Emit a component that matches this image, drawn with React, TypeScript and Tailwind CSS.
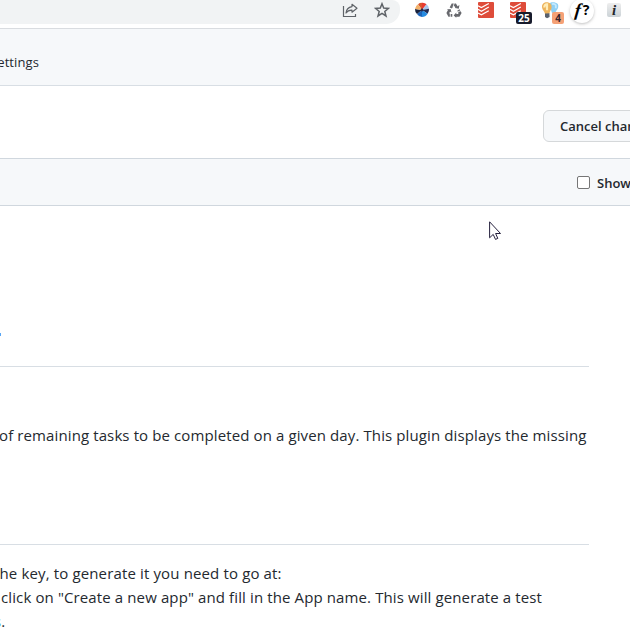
import React from "react";

function ShareIcon() {
  return (
    <svg width="16" height="16" viewBox="0 0 16 16" fill="none" stroke="#5f6368" strokeWidth="1.2">
      <path d="M1.500 4v10.500h12V12" />
      <path d="M10 2.300 15 6.200l-5 4V8.200C7.200 8.100 5.400 9 4 11c.3-3.400 2.500-5.800 6-6.400z" strokeLinejoin="round" />
    </svg>
  );
}

function StarIcon() {
  return (
    <svg width="16" height="16" viewBox="0 0 16 16" fill="none" stroke="#5f6368" strokeWidth="1.5">
      <path d="m8 1.800 1.700 4.300 4.700.3-3.600 3 1.200 4.600-4-2.600L4 14l1.200-4.600-3.600-3 4.700-.3z" />
    </svg>
  );
}

function WheelIcon() {
  return (
    <svg width="16" height="16" viewBox="0 0 16 16">
      <path d="M8 8 4 2.200Q5.500.8 8 .8z" fill="#d9552f" />
      <path d="M8 8V.8q2.700-.3 4.600 1.500z" fill="#e83a30" />
      <path d="m8 8 4.600-5.700Q14.700 4 15 6.700z" fill="#a9c7ed" />
      <path d="m8 8 7-1.300q.3 2.800-1.400 5z" fill="#202b55" />
      <path d="m8 8 5.600 3.700Q11.500 15 8 15z" fill="#258ae0" />
      <path d="M8 8v7q-3.300-.1-5-3z" fill="#1d63b8" />
      <path d="m8 8-5 4Q.8 9.700 1 7z" fill="#17213d" />
      <path d="M8 8 1 7q.2-3 3-4.800z" fill="#f3b16b" />
      <circle cx="8" cy="8" r="1.400" fill="#242b50" />
    </svg>
  );
}

function RecycleIcon() {
  return (
    <svg width="16" height="16" viewBox="0 0 16 16" fill="none" stroke="#68696e" strokeWidth="2.600">
      <path d="M4.800 6 6.500 2.800h2.700l1.500 2.700" />
      <path d="m12.400 8 1.700 3-1.400 2.400H9.500" />
      <path d="M6.300 13.400H3.200L1.900 11l1.500-2.800" />
      <path d="m9.200 6 3.600.7.600-3.700zM10.300 10.600l-2.700 2.800 2.700 2.400zM.9 7.600l3.700-.6.900 3.500z" fill="#68696e" stroke="none" />
      <path d="m8.300.8-1.200 4M11.700 10l3.500-1.500M4.300 11.500v4" stroke="#fff" strokeWidth=".8" />
    </svg>
  );
}

function TodoistIcon() {
  return (
    <svg width="16" height="16" viewBox="0 0 16 16">
      <rect width="16" height="16" rx="1" fill="#de4c3a" />
      <path d="m0 3.800 3.400 1.800L10.800 1.500M0 7.400l3.400 1.800 7.400-4.100M0 11l3.400 1.800 7.400-4.100" fill="none" stroke="#fff" strokeWidth="1.200" />
    </svg>
  );
}

function BulbIcon() {
  return (
    <svg width="18" height="18" viewBox="0 0 18 18">
      <path d="M8 3C9 .5 14.500.6 16.800 3c1.200 2.500.2 5-1.500 6.800L14 12h-3z" fill="#8fd0f4" />
      <path d="M11 3.200q2.500-1 3.800 1v3" fill="none" stroke="#c5eaff" strokeWidth="1.800" />
      <path d="M1 6.200C.8 3 3 1.300 5.700 1.300c3.200 0 5.200 2.200 4.900 5.200-.2 2.500-2 3.500-2.200 6.200l-4.400.2C3.700 10.200 1.300 9.200 1 6.200z" fill="#edb35c" />
      <path d="M3.300 6.500C3.300 4.300 4.600 3.200 6 3.300v6" fill="none" stroke="#ffedb8" strokeWidth="2.200" />
      <path d="m4 12.500 4.400-.2.200 3.700-2.600 1.300L4 16z" fill="#59616d" />
    </svg>
  );
}

function FormulaIcon() {
  return (
    <span className="absolute left-[-4px] top-[-3px] flex h-6 w-6 items-center justify-center rounded-full bg-white pb-[3px] font-['Liberation_Serif',serif] text-[18px] font-bold leading-none text-black shadow-[0_1px_3px_#8888]">
      <span className="inline-block -skew-x-6 italic">f</span>
      <span className="ml-[2px] font-['Open_Sans',sans-serif] text-[14px]">?</span>
    </span>
  );
}

function Toolbar() {
  return (
    <div className="flex h-[29px] items-start border-b border-[#d9dce0] bg-white">
      <div className="flex h-6 w-[400px] items-start justify-end gap-4 rounded-br-[14px] rounded-tr-[8px] bg-[#f1f3f4] pr-[10px] pt-[2px]">
        <ShareIcon />
        <StarIcon />
      </div>
      <div className="ml-[14px] flex gap-4 pt-[2px]">
        <WheelIcon />
        <RecycleIcon />
        <TodoistIcon />
        <div className="relative h-4 w-4">
          <TodoistIcon />
          <span className="absolute left-[6px] top-[10px] flex h-[12px] w-[16px] items-center justify-center rounded-[2px] bg-[#171b2c] text-[10px] font-bold leading-none text-white">25</span>
        </div>
        <div className="relative h-4 w-4">
          <div className="absolute left-[-1px] top-[-1px]"><BulbIcon /></div>
          <span className="absolute left-[10px] top-[10px] flex h-3 w-3 items-center justify-center rounded-[2px] bg-[#f5a176] text-[10px] font-bold leading-none text-[#38252d]">4</span>
        </div>
        <div className="relative h-4 w-4">
          <FormulaIcon />
        </div>
        <span className="ml-px mt-px flex h-[14px] w-[14px] items-center justify-center rounded-[2px] bg-linear-to-b from-[#eee] to-[#ccd3d7] font-['Liberation_Serif',serif] text-[15px] font-bold italic leading-none text-[#25272b]">i</span>
      </div>
    </div>
  );
}

export default function App() {
  return (
    <div className="h-[634px] w-[630px] overflow-hidden whitespace-nowrap bg-white font-['Open_Sans','Noto_Sans',sans-serif] text-[#24292f]">
      <Toolbar />
      <header className="flex h-[57px] items-center border-b border-[#d8dee4] bg-[#f6f8fa] pt-[12px] text-[13px]">
        <span className="-ml-[10px] tracking-[0.1px]">Settings</span>
      </header>
      <div className="flex h-[72px] pl-[543px] pt-[24px]">
        <button className="h-8 w-[140px] shrink-0 rounded-[6px] border border-[#d5d8da] bg-[#f6f8fa] pl-4 pt-px text-left text-[13px] font-semibold">Cancel changes</button>
      </div>
      <div className="flex h-[48px] items-center border-y border-[#d0d7de] bg-[#f6f8fa] pl-[577px]">
        <span className="h-[13px] w-[13px] shrink-0 rounded-[2px] border border-[#767676] bg-white" />
        <span className="ml-[7px] pt-[3px] text-[13px] font-semibold">Show diff</span>
      </div>
      <main className="relative w-[589px]">
        <svg className="absolute left-[489px] top-[15px]" width="13" height="20" viewBox="0 0 13 20">
          <path d="M.6.800v16l3.600-3.400 2.300 5 2.300-1-2.200-4.900h4.900z" fill="#fff" stroke="#25203d" strokeWidth="1" />
        </svg>
        <div className="h-[161px] border-b border-[#d8dee4] pt-[127px]">
          <div className="h-[3px] w-px bg-[#58a6f5]" />
        </div>
        <div className="h-[178px] border-b border-[#d8dee4] pt-[56px] text-[15px] leading-6 tracking-[0.112px]">
          <p><span className="-ml-px">of remaining tasks to be completed on a given day. This plugin displays the missing</span></p>
        </div>
        <div className="pt-[16px] text-[15px] leading-6 tracking-[0.117px]">
          <p><span className="-ml-[6px] tracking-[0.14px]">the key, to generate it you need to go at:</span></p>
          <p><span className="ml-px">click on "Create a new app" and fill in the App name. This will generate a test</span></p>
          <p><span className="-ml-[6px] text-[#4aa5e8]">s</span>.</p>
        </div>
      </main>
    </div>
  );
}
